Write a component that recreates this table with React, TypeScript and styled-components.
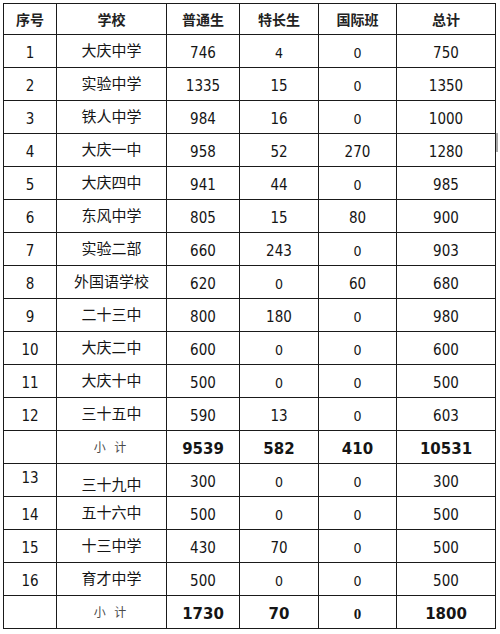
import React from 'react';
import styled, { createGlobalStyle } from 'styled-components';

const GlobalStyle = createGlobalStyle`
  html, body {
    margin: 0;
    padding: 0;
    background: #fff;
  }
`;

const Page = styled.div`
  position: relative;
  width: 500px;
  height: 634px;
  padding: 3px 0 0 3px;
  box-sizing: border-box;
  background: #fff;
`;

const Table = styled.table`
  border-collapse: collapse;
  table-layout: fixed;
  width: 492px;
  color: #111;
  font-family: "DejaVu Sans Condensed", "Liberation Sans", "Noto Sans CJK SC", sans-serif;
`;

const HeadCell = styled.th`
  height: 30px;
  padding: 0;
  border: 1px solid #1a1a1a;
  font-family: "Noto Sans CJK SC", sans-serif;
  font-size: 14px;
  line-height: 1;
  font-weight: 700;
  text-align: center;
  vertical-align: middle;
  color: #222;
`;

type Kind = 'name' | 'num' | 'small' | 'label' | 'bold' | 'serifBold';

const Cell = styled.td<{ $kind?: Kind; $shift?: number }>`
  height: 32px;
  padding: 0;
  border: 1px solid #1a1a1a;
  text-align: center;
  vertical-align: middle;
  line-height: 1;
  font-size: ${({ $kind }) =>
    $kind === 'small' ? '14px' : $kind === 'label' ? '12px' : '15px'};
  font-family: ${({ $kind }) =>
    $kind === 'name' || $kind === 'label'
      ? '"Noto Sans CJK SC", sans-serif'
      : $kind === 'bold'
      ? '"DejaVu Sans", "Liberation Sans", sans-serif'
      : $kind === 'serifBold'
      ? '"Liberation Serif", serif'
      : '"DejaVu Sans Condensed", "Liberation Sans", sans-serif'};
  font-weight: ${({ $kind }) => ($kind === 'bold' || $kind === 'serifBold' ? 700 : 400)};
  letter-spacing: ${({ $kind }) => ($kind === 'label' ? '3px' : '0')};
  color: ${({ $kind }) => ($kind === 'label' ? '#4a4a4a' : '#151515')};

  & > span {
    position: relative;
    top: ${({ $shift }) => $shift ?? 0}px;
  }
`;

const Caret = styled.div`
  position: absolute;
  left: 496px;
  top: 133px;
  width: 2px;
  height: 19px;
  background: #a8a8a8;
`;

type Row = [string, string, number, number, number, number];

const firstBlock: Row[] = [
  ['1', '大庆中学', 746, 4, 0, 750],
  ['2', '实验中学', 1335, 15, 0, 1350],
  ['3', '铁人中学', 984, 16, 0, 1000],
  ['4', '大庆一中', 958, 52, 270, 1280],
  ['5', '大庆四中', 941, 44, 0, 985],
  ['6', '东风中学', 805, 15, 80, 900],
  ['7', '实验二部', 660, 243, 0, 903],
  ['8', '外国语学校', 620, 0, 60, 680],
  ['9', '二十三中', 800, 180, 0, 980],
  ['10', '大庆二中', 600, 0, 0, 600],
  ['11', '大庆十中', 500, 0, 0, 500],
  ['12', '三十五中', 590, 13, 0, 603],
];

const secondBlock: Row[] = [
  ['13', '三十九中', 300, 0, 0, 300],
  ['14', '五十六中', 500, 0, 0, 500],
  ['15', '十三中学', 430, 70, 0, 500],
  ['16', '育才中学', 500, 0, 0, 500],
];

const widths = [53, 110, 73, 79, 78, 99];

const DataRow: React.FC<{ row: Row }> = ({ row }) => {
  const odd = row[0] === '13';
  return (
    <tr>
      <Cell $shift={odd ? -2 : 2}><span>{row[0]}</span></Cell>
      <Cell $kind="name" $shift={odd ? 3 : -2}><span>{row[1]}</span></Cell>
      <Cell $shift={2}><span>{row[2]}</span></Cell>
      <Cell $kind={row[3] < 10 ? 'small' : 'num'} $shift={2}><span>{row[3]}</span></Cell>
      <Cell $kind={row[4] === 0 ? 'small' : 'num'} $shift={2}><span>{row[4]}</span></Cell>
      <Cell $shift={2}><span>{row[5]}</span></Cell>
    </tr>
  );
};

const SubtotalRow: React.FC<{ values: number[]; serifLast?: boolean }> = ({ values, serifLast }) => (
  <tr>
    <Cell />
    <Cell $kind="label">小 计</Cell>
    {values.map((v, i) => (
      <Cell key={i} $kind={serifLast && v === 0 ? 'serifBold' : 'bold'} $shift={2}>
        <span>{v}</span>
      </Cell>
    ))}
  </tr>
);

const App: React.FC = () => {
  return (
    <>
      <GlobalStyle />
      <Page>
        <Table>
          <colgroup>
            {widths.map((w, i) => (
              <col key={i} style={{ width: w }} />
            ))}
          </colgroup>
          <thead>
            <tr>
              <HeadCell>序号</HeadCell>
              <HeadCell>学校</HeadCell>
              <HeadCell>普通生</HeadCell>
              <HeadCell>特长生</HeadCell>
              <HeadCell>国际班</HeadCell>
              <HeadCell>总计</HeadCell>
            </tr>
          </thead>
          <tbody>
            {firstBlock.map(r => (
              <DataRow key={r[0]} row={r} />
            ))}
            <SubtotalRow values={[9539, 582, 410, 10531]} />
            {secondBlock.map(r => (
              <DataRow key={r[0]} row={r} />
            ))}
            <SubtotalRow values={[1730, 70, 0, 1800]} serifLast />
          </tbody>
        </Table>
        <Caret />
      </Page>
    </>
  );
};

export default App;
